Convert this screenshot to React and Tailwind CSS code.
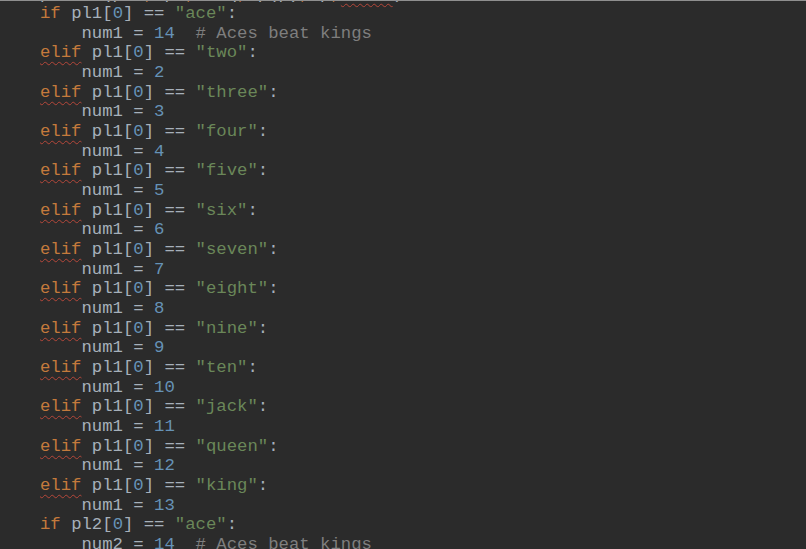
import React from "react";

const K = ({ children, squiggle }) => (
  <span
    className={
      squiggle
        ? "text-[#c47a3c] underline decoration-wavy decoration-[#b5473a] decoration-[1px] underline-offset-[4px]"
        : "text-[#c47a3c]"
    }
  >
    {children}
  </span>
);
const N = ({ children }) => <span className="text-[#6692b6]">{children}</span>;
const S = ({ children }) => <span className="text-[#6a8759]">{children}</span>;
const C = ({ children }) => <span className="text-[#7e7e7e]">{children}</span>;

const names = ["two", "three", "four", "five", "six", "seven", "eight", "nine", "ten", "jack", "queen", "king"];

function Cond({ kw, v, name, squiggle }) {
  return (
    <div className="h-[19.67px] whitespace-pre">
      <K squiggle={squiggle}>{kw}</K> {v}[<N>0</N>] == <S>"{name}"</S>:
    </div>
  );
}

function Assign({ v, n, comment }) {
  return (
    <div className="h-[19.67px] whitespace-pre">
      {"    "}
      {v} = <N>{n}</N>
      {comment ? (
        <>
          {"  "}
          <C># Aces beat kings</C>
        </>
      ) : null}
    </div>
  );
}

export default function App() {
  return (
    <div className="w-[806px] h-[549px] overflow-hidden bg-[#2b2b2b] border-t border-[#8f8f8f]">
      <div
        className="pl-[40px] mt-[-16.5px] text-[17.3px] leading-[19.67px] text-[#a6b0ba]"
        style={{ fontFamily: '"Liberation Mono", "DejaVu Sans Mono", monospace' }}
      >
        <div className="h-[19.67px] whitespace-pre">
          <span>p</span>l1 = (pl1<K>,</K> p1<K>,</K>
          {"   "}q<K>,</K> p(p)<K>,</K> p<K>,</K>
          <span className="underline decoration-wavy decoration-[#b5473a] decoration-[1px] underline-offset-[4px]">cardz</span>)
        </div>
        <Cond kw="if" v="pl1" name="ace" />
        <Assign v="num1" n="14" comment />
        {names.map((nm, i) => (
          <React.Fragment key={nm}>
            <Cond kw="elif" v="pl1" name={nm} squiggle />
            <Assign v="num1" n={String(i + 2)} />
          </React.Fragment>
        ))}
        <Cond kw="if" v="pl2" name="ace" />
        <Assign v="num2" n="14" comment />
      </div>
    </div>
  );
}
